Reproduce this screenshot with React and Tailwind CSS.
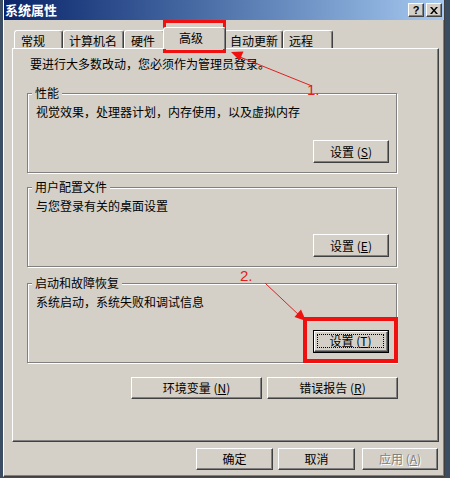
import React from "react";

const btn3dBase =
  "flex items-center justify-center bg-[#d4d0c8] border border-t-white border-l-white border-r-[#404040] border-b-[#404040] shadow-[inset_-1px_-1px_0_#808080] text-[12px] leading-[14px] whitespace-nowrap";

function Btn({ children, className = "", disabled = false }) {
  return (
    <div
      className={`${btn3dBase} ${
        disabled ? "text-[#808080] [text-shadow:1px_1px_0_#ffffff]" : "text-black"
      } ${className}`}
    >
      {children}
    </div>
  );
}

function DefaultBtn({ children }) {
  return (
    <div className="w-[76px] h-[23px] border border-black flex">
      <div className="flex-1 flex bg-[#d4d0c8] border border-t-white border-l-white border-r-[#404040] border-b-[#404040] shadow-[inset_-1px_-1px_0_#808080] p-[2px] pr-[3px] pb-[3px]">
        <div className="flex-1 flex items-center justify-center border border-dotted border-black whitespace-nowrap">
          {children}
        </div>
      </div>
    </div>
  );
}

function Label({ text, k }) {
  return (
    <span>
      {text} (<span className="underline">{k}</span>)
    </span>
  );
}

function Group({ title, desc, children }) {
  return (
    <div className="relative w-[370px] h-[80px] flex flex-col border border-[#808080] shadow-[inset_1px_1px_0_#fff,1px_1px_0_#fff] pt-[11px] pl-[8px] pr-[7px] pb-[9px]">
      <span className="absolute -top-[8px] left-[4px] px-[3px] bg-[#d4d0c8]">{title}</span>
      <div>{desc}</div>
      <div className="mt-auto self-end">{children}</div>
    </div>
  );
}

const tabBase =
  "bg-[#d4d0c8] border-t border-l border-r border-t-white border-l-white border-r-[#404040] rounded-t-[3px] shadow-[inset_-1px_0_0_#808080] whitespace-nowrap pt-[3px]";

export default function App() {
  return (
    <div className="relative w-[450px] h-[478px] overflow-hidden bg-[#3b4d63] font-['Noto_Sans_CJK_SC',sans-serif] text-[12px] leading-[14px] text-black">
      <div className="ml-[3px] w-[442px] h-[477px] flex flex-col bg-[#d4d0c8] border-l border-l-white border-r border-r-[#404040] border-b border-b-[#404040] shadow-[inset_-1px_-1px_0_#808080]">
        {/* title bar */}
        <div className="h-[20px] flex items-center justify-between bg-linear-to-r from-[#0a246a] to-[#a6caf0] pl-[1px] pr-[2px]">
          <span className="text-white font-bold text-[13px] leading-[16px]">系统属性</span>
          <div className="flex gap-[2px]">
            <div className="w-[16px] h-[14px] flex items-center justify-center bg-[#d4d0c8] border border-t-white border-l-white border-r-[#404040] border-b-[#404040] shadow-[inset_-1px_-1px_0_#808080] font-['Liberation_Sans',sans-serif] font-bold text-[11px] leading-[11px]">
              ?
            </div>
            <div className="w-[16px] h-[14px] flex items-center justify-center bg-[#d4d0c8] border border-t-white border-l-white border-r-[#404040] border-b-[#404040] shadow-[inset_-1px_-1px_0_#808080]">
              <svg width="8" height="7" viewBox="0 0 8 7">
                <path d="M0 0h2l2 2.5L6 0h2L5 3.5 8 7H6L4 4.5 2 7H0l3-3.5z" fill="#000" />
              </svg>
            </div>
          </div>
        </div>

        <div className="flex flex-col pl-[8px] pt-[7px]">
          {/* tabs */}
          <div className="flex items-end pl-[2px]">
            <div className={`${tabBase} h-[18px] w-[49px] pl-[6px]`}>常规</div>
            <div className={`${tabBase} h-[18px] w-[61px] pl-[5px]`}>计算机名</div>
            <div className={`${tabBase} h-[18px] w-[41px] pl-[6px]`}>硬件</div>
            <div className={`${tabBase} relative z-10 h-[22px] w-[63px] -mx-[2px] -mb-[1px] pl-[15px]`}>高级</div>
            <div className={`${tabBase} h-[18px] w-[59px] pl-[5px]`}>自动更新</div>
            <div className={`${tabBase} h-[18px] w-[50px] pl-[5px]`}>远程</div>
          </div>

          {/* panel */}
          <div className="w-[427px] h-[394px] flex flex-col border border-t-white border-l-white border-r-[#404040] border-b-[#404040] shadow-[inset_-1px_-1px_0_#808080] pt-[8px] pl-[14px]">
            <div className="ml-[3px]">要进行大多数改动，您必须作为管理员登录。</div>

            <div className="mt-[22px]">
              <Group title="性能" desc="视觉效果，处理器计划，内存使用，以及虚拟内存">
                <Btn className="w-[76px] h-[23px]">
                  <Label text="设置" k="S" />
                </Btn>
              </Group>
            </div>

            <div className="mt-[14px]">
              <Group title="用户配置文件" desc="与您登录有关的桌面设置">
                <Btn className="w-[76px] h-[23px]">
                  <Label text="设置" k="E" />
                </Btn>
              </Group>
            </div>

            <div className="mt-[16px]">
              <Group title="启动和故障恢复" desc="系统启动，系统失败和调试信息">
                <DefaultBtn>
                  <Label text="设置" k="T" />
                </DefaultBtn>
              </Group>
            </div>

            <div className="mt-[14px] w-[371px] flex justify-end gap-[5px]">
              <Btn className="w-[131px] h-[22px]">
                <Label text="环境变量" k="N" />
              </Btn>
              <Btn className="w-[131px] h-[22px]">
                <Label text="错误报告" k="R" />
              </Btn>
            </div>
          </div>

          {/* bottom buttons */}
          <div className="mt-[6px] w-[427px] pr-[1px] flex justify-end">
            <Btn className="w-[77px] h-[22px]">确定</Btn>
            <Btn className="w-[77px] h-[22px] ml-[5px]">取消</Btn>
            <Btn className="w-[76px] h-[22px] ml-[7px]" disabled>
              <Label text="应用" k="A" />
            </Btn>
          </div>
        </div>
      </div>

      {/* annotations */}
      <svg
        className="absolute left-0 top-0 pointer-events-none"
        width="450"
        height="478"
        viewBox="0 0 450 478"
      >
        <rect x="164.5" y="21.5" width="60" height="30" fill="none" stroke="#f01010" strokeWidth="3" />
        <line x1="312" y1="86" x2="240" y2="57" stroke="#e02020" strokeWidth="1" />
        <polygon points="231,52 243.5,51.5 239.5,60.5" fill="#f01010" />
        <text x="307" y="95" fill="#e02020" fontSize="15" fontFamily="Liberation Sans, sans-serif">1.</text>

        <rect x="305" y="319" width="91" height="42" fill="none" stroke="#f01010" strokeWidth="4" />
        <line x1="265" y1="283" x2="300" y2="316" stroke="#e02020" strokeWidth="1" />
        <polygon points="306,321 294.5,317 301,309.5" fill="#f01010" />
        <text x="240" y="281" fill="#e02020" fontSize="15" fontFamily="Liberation Sans, sans-serif">2.</text>
      </svg>
    </div>
  );
}
